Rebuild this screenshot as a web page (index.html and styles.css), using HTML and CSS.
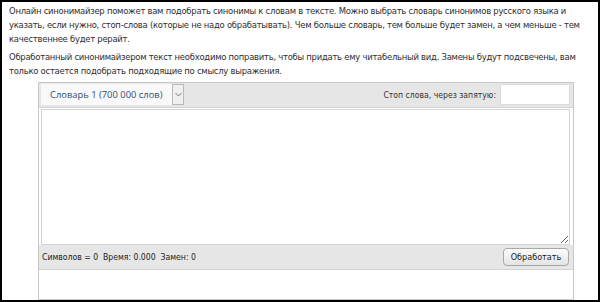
FILE: index.html
```html
<!DOCTYPE html>
<html>
<head>
    <title>Синонимайзер</title>
    <link rel="stylesheet" href="styles.css">
</head>
<body>
    <div class="frame">
        <p class="intro">Онлайн синонимайзер поможет вам подобрать синонимы к словам в тексте. Можно выбрать словарь синонимов русского языка и указать, если нужно, стоп-слова (которые не надо обрабатывать). Чем больше словарь, тем больше будет замен, а чем меньше - тем качественнее будет рерайт.</p>
        <p class="intro">Обработанный синонимайзером текст необходимо поправить, чтобы придать ему читабельный вид. Замены будут подсвечены, вам только остается подобрать подходящие по смыслу выражения.</p>

        <div class="widget">
            <div class="toolbar">
                <div class="dict-select">
                    <span class="dict-label">Словарь 1 (700 000 слов)</span>
                    <span class="dict-arrow">
                        <svg width="7" height="5" viewBox="0 0 7 5"><path d="M0.5 1 L3.5 4 L6.5 1" fill="none" stroke="#777" stroke-width="1"/></svg>
                    </span>
                </div>
                <div class="stop-words">
                    <label for="stop">Стоп слова, через запятую:</label>
                    <input type="text" id="stop" class="stop-input">
                </div>
            </div>
            <textarea class="source"></textarea>
            <div class="statusbar">
                <span class="stats">Символов = 0&nbsp; Время: 0.000&nbsp; Замен: 0</span>
                <button class="process-btn">Обработать</button>
            </div>
            <div class="output"></div>
        </div>
    </div>
</body>
</html>
```

FILE: styles.css
```css
html, body {
    margin: 0;
    padding: 0;
    background-color: #fff;
}

.frame {
    box-sizing: border-box;
    width: 600px;
    height: 302px;
    border: 2px solid #000;
    padding: 2px 0 0 7px;
    font-family: "DejaVu Sans Condensed", "DejaVu Sans", Verdana, sans-serif;
    color: #2e2e2e;
    overflow: hidden;
}

.intro {
    margin: 0 0 4px 0;
    font-size: 9.4px;
    letter-spacing: -0.25px;
    line-height: 14px;
    width: 584px;
}

.widget {
    box-sizing: border-box;
    width: 536px;
    height: 218px;
    margin: 0 0 0 29px;
    border: 1px solid #c8c8c8;
    display: flex;
    flex-direction: column;
}

.toolbar {
    background-color: #e6e6e6;
    height: 25px;
    padding: 1px 3px 0 2px;
    display: flex;
    justify-content: space-between;
    box-sizing: border-box;
    border-bottom: 1px solid #d4d4d4;
}

.dict-select {
    display: flex;
    height: 21px;
    background-color: #f9f9f9;
}

.dict-label {
    font-family: "Open Sans", "Noto Sans", sans-serif;
    font-size: 9.4px;
    color: #2f4d6e;
    line-height: 21px;
    padding: 0 10px 0 9px;
}

.dict-arrow {
    width: 12px;
    border: 1px solid #b8b8b8;
    background-color: #f0f0f0;
    display: flex;
    align-items: center;
    justify-content: center;
    box-sizing: border-box;
}

.stop-words {
    display: flex;
    align-items: center;
    gap: 4px;
    height: 21px;
}

.stop-words label {
    font-size: 8.6px;
    color: #333;
}

.stop-input {
    box-sizing: border-box;
    width: 70px;
    height: 21px;
    border: 1px solid #dcdcdc;
    background: #fff;
    margin: 0;
    padding: 0;
}

.source {
    box-sizing: border-box;
    display: block;
    width: 529px;
    height: 136px;
    margin: 1px 0 0 2px;
    border: 1px solid #d4d4d4;
    resize: both;
    padding: 0;
}

.statusbar {
    background-color: #e6e6e6;
    height: 25px;
    box-sizing: border-box;
    display: flex;
    align-items: center;
    justify-content: space-between;
    padding: 0 4px 0 3px;
    border-bottom: 1px solid #d4d4d4;
}

.stats {
    font-size: 8.6px;
    color: #222;
}

.process-btn {
    font-family: "DejaVu Sans Condensed", "DejaVu Sans", sans-serif;
    font-size: 9px;
    color: #222;
    height: 18px;
    width: 66px;
    padding: 0;
    border: 1px solid #a8a8a8;
    border-radius: 4px;
    background: linear-gradient(#fdfdfd, #e4e4e4);
}

.output {
    flex: 1;
    background-color: #fff;
}
```
